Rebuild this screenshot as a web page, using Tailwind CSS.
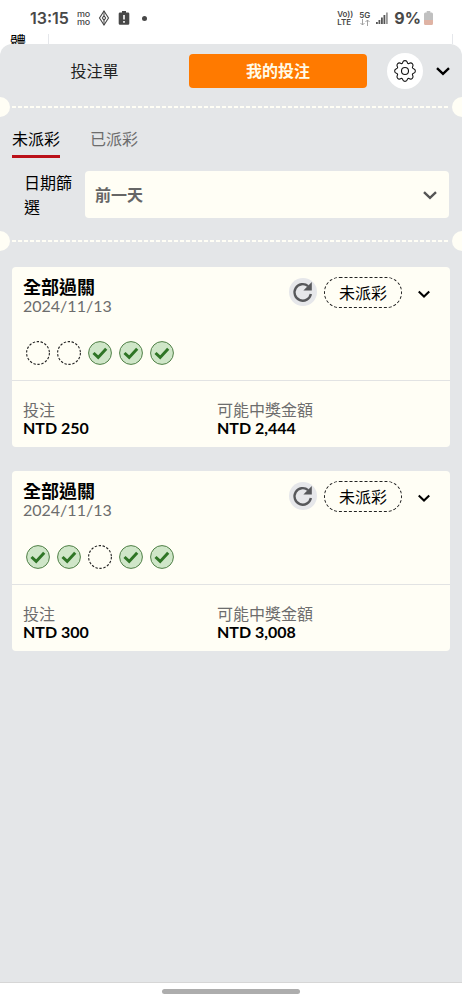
<!DOCTYPE html>
<html lang="zh-Hant">
<head>
<meta charset="utf-8">
<meta name="viewport" content="width=device-width, initial-scale=1">
<title>我的投注</title>
<script src="https://cdn.jsdelivr.net/npm/@tailwindcss/browser@4"></script>
</head>
<body class="flex min-h-screen flex-col overflow-x-hidden bg-white font-[Lato,'Noto_Sans_CJK_TC',sans-serif] text-base text-black">

<svg class="hidden">
  <symbol id="tick" viewBox="0 0 24 24">
    <circle cx="12" cy="12" r="11.4" fill="#cfe6c8" stroke="#4f7f46" stroke-width="1"/>
    <path d="M5.5 12 10.2 16.4 18.2 7.8" fill="none" stroke="#2f7526" stroke-width="3"/>
  </symbol>
  <symbol id="pending" viewBox="0 0 24 24">
    <circle cx="12" cy="12" r="11.4" fill="none" stroke="#222" stroke-width="1.1" stroke-dasharray="2.4 1.6"/>
  </symbol>
  <symbol id="chevron" viewBox="0 0 16 16">
    <path d="M2 5.2 8 10.8 14 5.2" fill="none" stroke="currentColor" stroke-width="2.4"/>
  </symbol>
  <symbol id="refresh" viewBox="0 0 24 24">
    <path d="M17.6 5.6A9 9 0 1 0 20.6 14.200" fill="none" stroke="#57585b" stroke-width="2.6"/>
    <path d="M21.600 1.200V10.400h-9.200z" fill="#57585b"/>
  </symbol>
</svg>

<header class="flex h-9 items-center justify-between pr-[29px] pl-[30px] font-[Inter,sans-serif] text-[#484848]">
  <div class="flex items-center">
    <span class="text-base font-semibold">13:15</span>
    <span class="ml-2 text-[9px] leading-2 font-medium">mo<br>mo</span>
    <svg class="ml-2 h-4 w-3" viewBox="0 0 12 16" fill="none" stroke="#484848"><path d="M6 1 10.5 8 6 15 1.5 8z" stroke-width="1.1"/><path d="M6 5.500 7.600 8 6 10.500 4.400 8z" stroke-width="1.100"/><path d="M6 1v4M6 11v4"/></svg>
    <svg class="ml-2 h-4 w-3" viewBox="0 0 12 16"><path d="M4 1h4v1.500h2a1.300 1.300 0 0 1 1.300 1.300v9.700A1.300 1.300 0 0 1 10 14.800H2A1.300 1.300 0 0 1 .7 13.500V3.800A1.300 1.300 0 0 1 2 2.500h2z" fill="#484848"/><path d="M6 5v4.600M6 11v1.700" stroke="#fff" stroke-width="1.600"/></svg>
    <span class="ml-3 size-[5px] rounded-full bg-[#484848]"></span>
  </div>
  <div class="flex items-center">
    <span class="text-[8px] leading-2 font-semibold">Vo))<br>LTE</span>
    <span class="ml-1.5 flex flex-col items-center text-[8px] leading-2 font-semibold">5G
      <svg class="h-[7px] w-[10px]" viewBox="0 0 10 7" fill="none" stroke="#999"><path d="M2.500 0v6M.5 4l2 2 2-2M7.500 7V1M5.500 3l2-2 2 2" stroke-width=".9"/></svg>
    </span>
    <svg class="ml-1.5 h-3 w-3" viewBox="0 0 12 12"><path d="M0 10h1.800v2H0zM2.500 8h1.800v4H2.500zM5 5.500h1.800V12H5zM7.500 3h1.800v9H7.500z" fill="#555"/><path d="M10 .500h1.800V12H10z" fill="#999"/></svg>
    <span class="ml-1.5 text-base font-bold">9%</span>
    <svg class="ml-[3px] h-[14px] w-[9px]" viewBox="0 0 10 14" preserveAspectRatio="none"><path d="M3 0h4v1.500h1.500A1.500 1.500 0 0 1 10 3v6H0V3a1.500 1.500 0 0 1 1.500-1.500H3z" fill="#c0c0c0"/><path d="M0 9h10v3.500a1.500 1.500 0 0 1-1.500 1.500h-7A1.500 1.500 0 0 1 0 12.500z" fill="#dfb3a4"/></svg>
  </div>
</header>

<div class="-mt-0.5 flex h-2.5 justify-between overflow-hidden pr-[9px] pl-2.5 leading-4">
  <span>體</span>
  <span class="mr-auto ml-[22px] w-px bg-gray-200"></span>
  <span class="w-px bg-gray-200"></span>
</div>

<main class="flex-1 overflow-hidden rounded-t-xl border-b border-[#d6d6d6] bg-[#e4e6e8]">
  <nav class="flex h-[53px] items-center pr-[11px]">
    <button class="h-full flex-1 text-[#222]">投注單</button>
    <button class="h-[34px] w-[178px] rounded bg-[#ff7a00] font-bold text-[#fffbe8]">我的投注</button>
    <button class="ml-5 flex size-9 items-center justify-center rounded-full bg-white" aria-label="設定">
      <svg class="size-[22px]" viewBox="-.5 -.5 17 17" fill="none" stroke="#161616" stroke-width=".85"><circle cx="8" cy="8" r="2.700"/><path d="M9.796 1.343c-.527-1.790-3.065-1.790-3.592 0l-.094.319a.873.873 0 0 1-1.255.520l-.292-.160c-1.640-.892-3.433.902-2.540 2.541l.159.292a.873.873 0 0 1-.520 1.255l-.319.094c-1.790.527-1.790 3.065 0 3.592l.319.094a.873.873 0 0 1 .520 1.255l-.160.292c-.892 1.640.901 3.434 2.541 2.540l.292-.159a.873.873 0 0 1 1.255.520l.094.319c.527 1.790 3.065 1.790 3.592 0l.094-.319a.873.873 0 0 1 1.255-.520l.292.160c1.640.893 3.434-.902 2.540-2.541l-.159-.292a.873.873 0 0 1 .520-1.255l.319-.094c1.790-.527 1.790-3.065 0-3.592l-.319-.094a.873.873 0 0 1-.520-1.255l.160-.292c.893-1.640-.902-3.433-2.541-2.540l-.292.159a.873.873 0 0 1-1.255-.520z"/></svg>
    </button>
    <button class="ml-3" aria-label="收合"><svg class="size-4"><use href="#chevron"/></svg></button>
  </nav>

  <div class="-mx-2.5 flex items-center gap-0.5">
    <span class="size-5 rounded-full bg-[#fffef5]"></span>
    <span class="h-0.5 flex-1 bg-[repeating-linear-gradient(90deg,#fffef5_0_4px,transparent_4px_6px)]"></span>
    <span class="size-5 rounded-full bg-[#fffef5]"></span>
  </div>

  <div class="flex gap-[30px] px-3 pt-1.5">
    <button class="border-b-[3px] border-[#bb1119] leading-8">未派彩</button>
    <button class="border-b-[3px] border-transparent leading-8 text-[#6d6d6d]">已派彩</button>
  </div>

  <div class="mt-[13px] mb-3 flex pr-[13px] pl-6">
    <label for="date" class="w-[61px] pr-3">日期篩選</label>
    <div class="relative flex-1">
      <select id="date" class="h-[47px] w-full appearance-none rounded bg-[#fffef5] px-2.5 font-bold text-[#666]"><option>前一天</option></select>
      <svg class="pointer-events-none absolute top-4 right-[11px] size-4 text-[#555]"><use href="#chevron"/></svg>
    </div>
  </div>

  <div class="-mx-2.5 flex items-center gap-0.5">
    <span class="size-5 rounded-full bg-[#fffef5]"></span>
    <span class="h-0.5 flex-1 bg-[repeating-linear-gradient(90deg,#fffef5_0_4px,transparent_4px_6px)]"></span>
    <span class="size-5 rounded-full bg-[#fffef5]"></span>
  </div>

  <div class="mt-4 flex flex-col gap-6 px-3">
    <article class="rounded bg-[#fffef5]">
      <div class="flex px-[11px] pt-2.5">
        <div class="flex-1">
          <h2 class="text-lg leading-5 font-bold">全部過關</h2>
          <p class="leading-[18px] text-[#6d6d6d]">2024/11/13</p>
        </div>
        <button class="mt-px flex size-7 items-center justify-center rounded-full bg-[#e6e7ea]" aria-label="重新整理"><svg class="size-[22px]"><use href="#refresh"/></svg></button>
        <span class="ml-[7px] flex h-[31px] w-[78px] items-center justify-center rounded-full border border-dashed border-[#222]">未派彩</span>
        <button class="mr-2 ml-[15px] h-[34px]" aria-label="展開"><svg class="size-[14px]"><use href="#chevron"/></svg></button>
      </div>
      <div class="flex gap-[7px] border-b border-[#e2e3e3] px-3.5 pt-[26px] pb-[15px]">
        <svg class="size-6"><use href="#pending"/></svg>
        <svg class="size-6"><use href="#pending"/></svg>
        <svg class="size-6"><use href="#tick"/></svg>
        <svg class="size-6"><use href="#tick"/></svg>
        <svg class="size-6"><use href="#tick"/></svg>
      </div>
      <dl class="grid grid-cols-[194px_1fr] px-[11px] pt-5 pb-2.5">
        <div><dt class="leading-[18px] text-[#6d6d6d]">投注</dt><dd class="leading-[18px] font-bold">NTD 250</dd></div>
        <div><dt class="leading-[18px] text-[#6d6d6d]">可能中獎金額</dt><dd class="leading-[18px] font-bold">NTD 2,444</dd></div>
      </dl>
    </article>

    <article class="rounded bg-[#fffef5]">
      <div class="flex px-[11px] pt-2.5">
        <div class="flex-1">
          <h2 class="text-lg leading-5 font-bold">全部過關</h2>
          <p class="leading-[18px] text-[#6d6d6d]">2024/11/13</p>
        </div>
        <button class="mt-px flex size-7 items-center justify-center rounded-full bg-[#e6e7ea]" aria-label="重新整理"><svg class="size-[22px]"><use href="#refresh"/></svg></button>
        <span class="ml-[7px] flex h-[31px] w-[78px] items-center justify-center rounded-full border border-dashed border-[#222]">未派彩</span>
        <button class="mr-2 ml-[15px] h-[34px]" aria-label="展開"><svg class="size-[14px]"><use href="#chevron"/></svg></button>
      </div>
      <div class="flex gap-[7px] border-b border-[#e2e3e3] px-3.5 pt-[26px] pb-[15px]">
        <svg class="size-6"><use href="#tick"/></svg>
        <svg class="size-6"><use href="#tick"/></svg>
        <svg class="size-6"><use href="#pending"/></svg>
        <svg class="size-6"><use href="#tick"/></svg>
        <svg class="size-6"><use href="#tick"/></svg>
      </div>
      <dl class="grid grid-cols-[194px_1fr] px-[11px] pt-5 pb-2.5">
        <div><dt class="leading-[18px] text-[#6d6d6d]">投注</dt><dd class="leading-[18px] font-bold">NTD 300</dd></div>
        <div><dt class="leading-[18px] text-[#6d6d6d]">可能中獎金額</dt><dd class="leading-[18px] font-bold">NTD 3,008</dd></div>
      </dl>
    </article>
  </div>
</main>

<footer class="flex h-[17px] items-center justify-center bg-white">
  <span class="h-[5px] w-[30%] rounded-full bg-[#adadad]"></span>
</footer>
</body>
</html>
